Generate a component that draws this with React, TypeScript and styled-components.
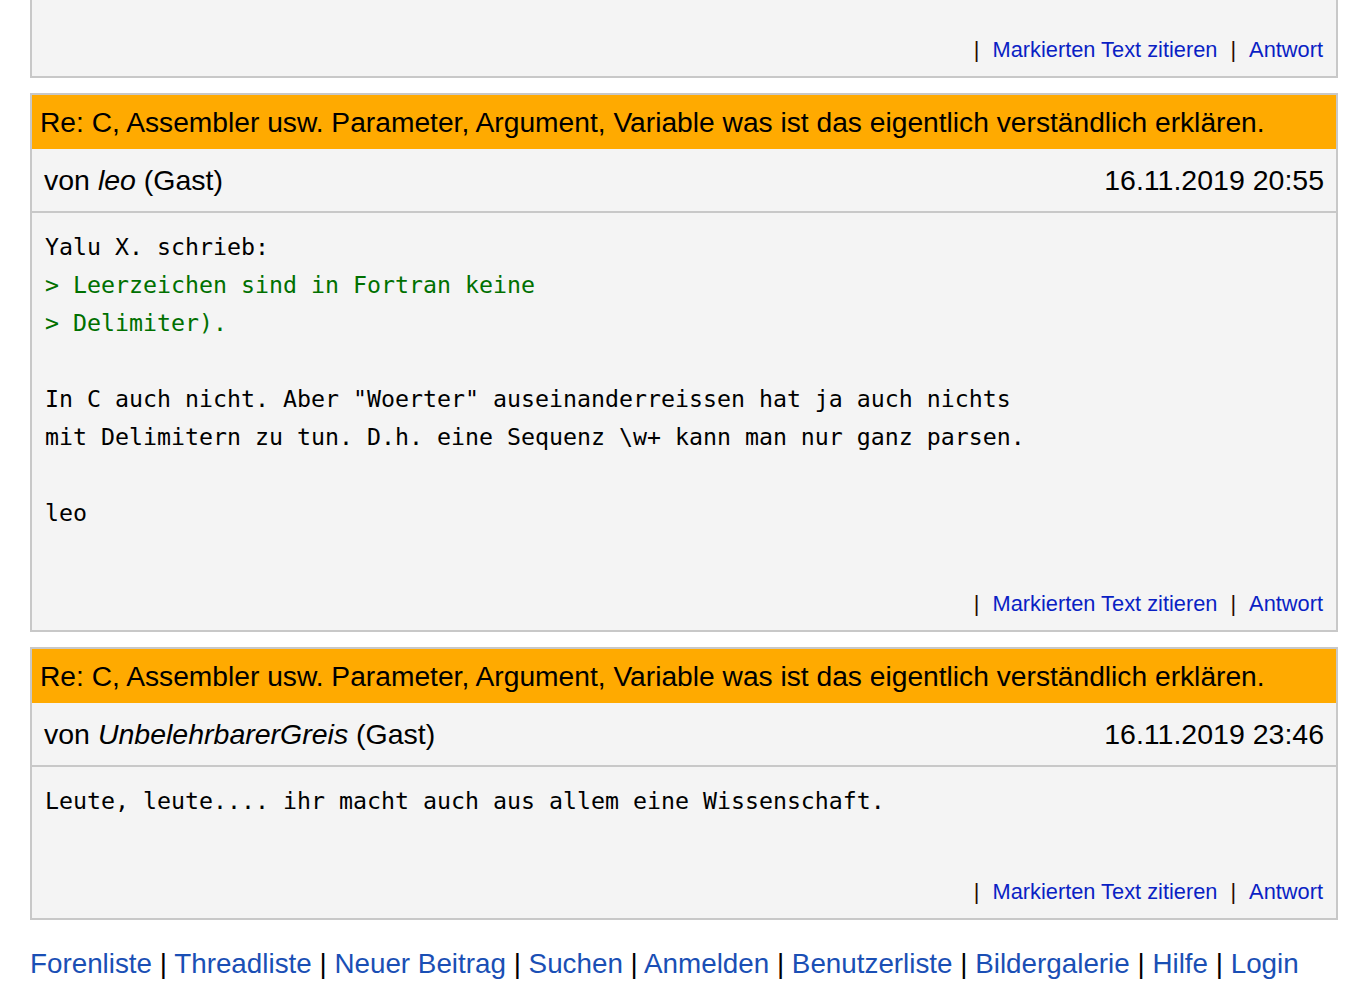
import styled, { createGlobalStyle } from "styled-components";

const GlobalStyle = createGlobalStyle`
    body {
        margin: 0;
        background: #fff;
        font-family: "Liberation Sans", Arial, sans-serif;
        color: #000;
    }
`;

const Page = styled.div`
    padding: 0 27px 0 30px;
`;

const PostBox = styled.section<{ $cut?: boolean }>`
    border: 2px solid #c8c8c8;
    border-top-width: ${(p) => (p.$cut ? "0" : "2px")};
    background: #f4f4f4;
    margin-bottom: 15px;
`;

const Subject = styled.div`
    background: #ffaa00;
    font-size: 28.2px;
    line-height: 54px;
    padding: 0 8px;
    white-space: nowrap;
`;

const Meta = styled.div`
    display: flex;
    justify-content: space-between;
    align-items: center;
    height: 62px;
    padding: 0 12px;
    font-size: 28.5px;
    border-bottom: 2px solid #c8c8c8;
`;

const Author = styled.em``;

const Body = styled.pre`
    margin: 0;
    padding: 15px 13px 59px;
    font-family: "DejaVu Sans Mono", "Liberation Mono", monospace;
    font-size: 23.25px;
    line-height: 38px;
    white-space: pre-wrap;
`;

const Quote = styled.span`
    color: #007000;
`;

const Actions = styled.div<{ $top?: number }>`
    display: flex;
    justify-content: flex-end;
    align-items: center;
    gap: 10px;
    padding: ${(p) => p.$top ?? 0}px 13px 13px;
    font-size: 21.8px;
    line-height: 26px;
`;

const Sep = styled.span`
    color: #2a0a00;
    padding: 0 3px;
`;

const ActionLink = styled.a`
    color: #0a1fc4;
    text-decoration: none;
`;

const Footer = styled.nav`
    font-size: 27.8px;
    line-height: 34px;
    padding: 12px 0;
    white-space: nowrap;
`;

const FootLink = styled.a`
    color: #1a4fb5;
    text-decoration: none;
`;

const PostActions = ({ top }: { top?: number }) => (
    <Actions $top={top}>
        <Sep>|</Sep>
        <ActionLink href="#">Markierten Text zitieren</ActionLink>
        <Sep>|</Sep>
        <ActionLink href="#">Antwort</ActionLink>
    </Actions>
);

const subject =
    "Re: C, Assembler usw. Parameter, Argument, Variable was ist das eigentlich verständlich erklären.";

const footerLinks = [
    "Forenliste",
    "Threadliste",
    "Neuer Beitrag",
    "Suchen",
    "Anmelden",
    "Benutzerliste",
    "Bildergalerie",
    "Hilfe",
    "Login",
];

const App = () => (
    <>
        <GlobalStyle />
        <Page>
            <PostBox $cut>
                <PostActions top={37} />
            </PostBox>

            <PostBox>
                <Subject>{subject}</Subject>
                <Meta>
                    <span>
                        von <Author>leo</Author> (Gast)
                    </span>
                    <span>16.11.2019 20:55</span>
                </Meta>
                <Body>
                    {"Yalu X. schrieb:\n"}
                    <Quote>{"> Leerzeichen sind in Fortran keine\n> Delimiter)."}</Quote>
                    {"\n\nIn C auch nicht. Aber \"Woerter\" auseinanderreissen hat ja auch nichts\nmit Delimitern zu tun. D.h. eine Sequenz \\w+ kann man nur ganz parsen.\n\nleo"}
                </Body>
                <PostActions />
            </PostBox>

            <PostBox>
                <Subject>{subject}</Subject>
                <Meta>
                    <span>
                        von <Author>UnbelehrbarerGreis</Author> (Gast)
                    </span>
                    <span>16.11.2019 23:46</span>
                </Meta>
                <Body>Leute, leute.... ihr macht auch aus allem eine Wissenschaft.</Body>
                <PostActions />
            </PostBox>

            <Footer>
                {footerLinks.map((name, idx) => (
                    <span key={name}>
                        {idx > 0 && " | "}
                        <FootLink href="#">{name}</FootLink>
                    </span>
                ))}
            </Footer>
        </Page>
    </>
);

export default App;
